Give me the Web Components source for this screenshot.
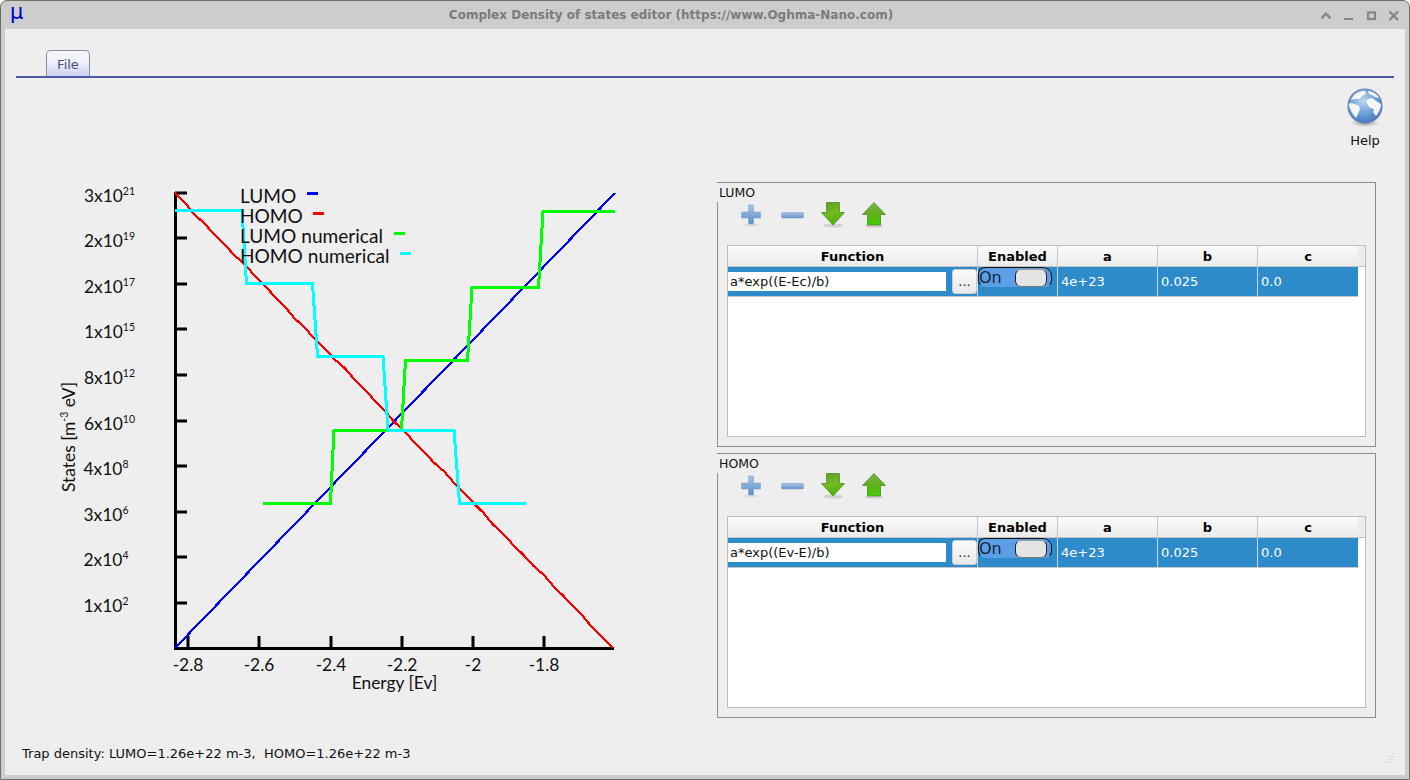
<!DOCTYPE html>
<html><head><meta charset="utf-8"><style>
html,body{margin:0;padding:0;width:1410px;height:780px;overflow:hidden;background:#fff}
body{font-family:"DejaVu Sans",sans-serif}
</style></head><body>
<app-window>
<title-bar slot="title" heading="Complex Density of states editor (https://www.Oghma-Nano.com)"></title-bar>
<ribbon-bar slot="ribbon"></ribbon-bar>
<dos-chart slot="chart"></dos-chart>
<dos-group slot="groups" label="LUMO" formula="a*exp((E-Ec)/b)"></dos-group>
<dos-group slot="groups" label="HOMO" formula="a*exp((Ev-E)/b)"></dos-group>
<status-line slot="status">Trap density: LUMO=1.26e+22 m-3,&nbsp; HOMO=1.26e+22 m-3</status-line>
</app-window>
<script>
const def=(n,html,init)=>customElements.define(n,class extends HTMLElement{
 connectedCallback(){if(this.shadowRoot)return;const s=this.attachShadow({mode:'open'});s.innerHTML=typeof html==='function'?html(this):html;if(init)init(s,this);}
});
def('app-window',`<style>
:host{display:block;width:1410px;height:780px;box-sizing:border-box;background:#cdcdcd;border:1px solid #6f6f6f;border-radius:7px 7px 0 0;overflow:hidden;position:relative}
.body{margin:0 4px 4px 4px;height:746px;background:#eeeeee;display:flex;flex-direction:column;box-sizing:border-box}
.main{display:flex;flex:none;height:536px}
.left{width:712px;flex:none}
.right{flex:none;width:659px;display:flex;flex-direction:column;gap:6px}
.status{margin-top:28px;padding-left:17px}
.grip{position:absolute;right:15px;bottom:16px;width:11px;height:11px;background-image:radial-gradient(circle,#c0c0c0 .8px,transparent 1px);background-size:3px 3px;clip-path:polygon(100% 0,100% 100%,0 100%)}
</style><slot name="title"></slot><div class="body"><slot name="ribbon"></slot>
<div class="main"><div class="left"><slot name="chart"></slot></div><div class="right"><slot name="groups"></slot></div></div>
<div class="status"><slot name="status"></slot></div></div><div class="grip"></div>`);

def('title-bar',h=>`<style>
:host{display:flex;align-items:center;height:28px;position:relative;color:#7b7b7b}
.mu{font:21px "DejaVu Sans",sans-serif;color:#0000c8;position:absolute;left:9px;top:-3px;line-height:28px}
.t{flex:1;text-align:center;font:bold 12px "DejaVu Sans",sans-serif;padding-right:68px;white-space:nowrap}
svg{position:absolute;left:1316px;top:0}
</style><span class="mu">μ</span><span class="t">${h.getAttribute('heading')}</span>
<svg width="90" height="27" fill="none" stroke="#858585" stroke-width="2.200"><path d="M4.500 17.500 9 12.500 13.500 17.500"/><path d="M27 18H36"/><rect x="51" y="11.500" width="7" height="6.500"/><path d="M72.500 10.500 81 19M81 10.500 72.500 19"/></svg>`);

def('ribbon-bar',`<style>
:host{display:block;height:153px;position:relative;flex:none}
.tabs{height:49px;margin:0 11px;border-bottom:2px solid #4b5aa6;box-sizing:border-box;display:flex;align-items:flex-end;padding-left:30px}
.tab{width:44px;height:26px;box-sizing:border-box;border:1px solid #8a8aa8;border-bottom:none;border-radius:5px 5px 0 0;background:linear-gradient(#f6f6fb,#eef0fa 45%,#ccd2f2);color:#4a4a86;font:13px "DejaVu Sans",sans-serif;text-align:center;line-height:28px}
.help{position:absolute;right:10px;top:58px;width:60px;display:flex;flex-direction:column;align-items:center;font:13px "DejaVu Sans",sans-serif;color:#111;gap:5px}
</style><div class="tabs"><div class="tab">File</div></div>
<div class="help"><svg width="40" height="41" viewBox="0 0 40 41">
<defs><radialGradient id="g" cx=".45" cy=".35" r=".75"><stop offset="0" stop-color="#bcd6f0"/><stop offset=".6" stop-color="#5f97d2"/><stop offset="1" stop-color="#3f6fb4"/></radialGradient>
<radialGradient id="s"><stop offset="0" stop-color="#666" stop-opacity=".65"/><stop offset="1" stop-color="#777" stop-opacity="0"/></radialGradient></defs>
<ellipse cx="20" cy="36" rx="15" ry="4" fill="url(#s)"/>
<circle cx="20" cy="19" r="17" fill="url(#g)" stroke="#6c7fb8" stroke-width="1.200"/>
<path d="M9 8C13 4.500 17 3.500 20 4L21 7 17 9 15 12 10 12 6 13ZM23 4C28 4.500 32 7 34.500 11L30 10 27 8 24 7ZM3.500 17C6 15 11 17 14 19 16 22 14 24 13 27L11 31C7 27 5 22 3.500 17ZM21 13 27 11 31 14 36 17C36 21 34 25 31 29L28 25 29 22 25 21 22 17Z" fill="#f5f6f8"/>
</svg><span>Help</span></div>`);

def('status-line',`<style>:host{display:block;font:13px "DejaVu Sans",sans-serif;color:#111;line-height:16px;white-space:nowrap}</style><slot></slot>`);

const plus=`<svg width="24" height="24" viewBox="0 0 24 24"><defs><linearGradient id="b" x1="0" y1="0" x2="0" y2="1"><stop offset="0" stop-color="#a9c4e6"/><stop offset="1" stop-color="#5f8dc6"/></linearGradient></defs><ellipse cx="12" cy="22" rx="8" ry="1.500" fill="#000" opacity=".07"/><path d="M9.500 2h5v7H21.500v6h-7v6h-5v-6H2.500V9h7Z" fill="url(#b)" stroke="#7ea0cf" stroke-width=".6"/></svg>`;
const minus=`<svg width="24" height="24" viewBox="0 0 24 24"><defs><linearGradient id="c" x1="0" y1="0" x2="0" y2="1"><stop offset="0" stop-color="#a9c4e6"/><stop offset="1" stop-color="#6592ca"/></linearGradient></defs><rect x="1.500" y="9.500" width="22" height="5.500" rx="1" fill="url(#c)" stroke="#7ea0cf" stroke-width=".6"/></svg>`;
const down=`<svg width="26" height="26" viewBox="0 0 26 26"><defs><linearGradient id="d" x1="0" y1="0" x2=".3" y2="1"><stop offset="0" stop-color="#5f9a30"/><stop offset=".55" stop-color="#70bd1c"/><stop offset="1" stop-color="#55b00e"/></linearGradient></defs><ellipse cx="13" cy="23.500" rx="10" ry="2" fill="#000" opacity=".12"/><path d="M6.500 .500H19.500V10.500H24.500L13 23 1.500 10.500H6.500Z" fill="url(#d)" stroke="#4f8a24" stroke-width=".8"/></svg>`;
const up=`<svg width="26" height="26" viewBox="0 0 26 26"><defs><linearGradient id="u" x1="0" y1="0" x2="0" y2="1"><stop offset="0" stop-color="#7fb24a"/><stop offset=".5" stop-color="#5fb01e"/><stop offset="1" stop-color="#3fd100"/></linearGradient></defs><ellipse cx="13" cy="24" rx="9" ry="1.800" fill="#000" opacity=".12"/><path d="M13 .500 24.500 12.500H19.500V23H6.500V12.500H1.500Z" fill="url(#u)" stroke="#4f8a24" stroke-width=".8"/></svg>`;

def('on-switch',`<style>
:host{display:block;width:74px;height:20px;position:relative;font:16px "DejaVu Sans",sans-serif;color:#14233a}
.bg{position:absolute;inset:0;background:#5d9fe6;border-radius:7px 9px 7px 7px;border:1px solid #111;border-bottom-color:#5d9fe6;box-sizing:border-box}
.on{position:absolute;left:1px;top:1px;line-height:20px}
.k{position:absolute;left:37px;top:2px;width:32px;height:18px;box-sizing:border-box;background:#e4e4e4;border-radius:6px;border:1px solid #222;border-top-color:#999;border-bottom-color:#777}
</style><div class="bg"></div><span class="on">On</span><div class="k"></div>`);

def('dos-table',h=>`<style>
:host{display:block;width:639px;height:192px;box-sizing:border-box;border:1px solid #bdbdbd;background:#fff;font:13px "DejaVu Sans",sans-serif}
.g{display:grid;grid-template-columns:250px 80px 100px 100px 100px}
.hdr{height:20px;background:#ededed;border-bottom:1px solid #c4c4c4;color:#000;width:637px;position:relative}
.hdr .g{height:20px;width:630px;background:linear-gradient(#fbfbfb,#ebebeb)}
.hdr span{font-weight:bold;text-align:center;line-height:21px;border-right:1px solid #c8c8c8;box-sizing:border-box}
.hdr span:last-child{border-right:none}
.row{height:29px;background:#2e8bc9;color:#fff;width:630px;border-bottom:1px solid #c6c6c6}
.row>div{box-sizing:border-box;border-right:1px solid #c3d6e6;height:29px;line-height:30px;padding-left:3px;position:relative}
.row>div:last-child{border-right:none}
.f{padding:0!important;display:flex;align-items:flex-start}
.fi{display:block;margin-top:5px;width:218px;height:19px;background:#fff;color:#111;padding-left:2px;box-sizing:border-box;line-height:20px}
.b{margin:2px 0 0 6px;width:25px;height:25px;box-sizing:border-box;background:linear-gradient(#fafafa,#e8e8e8);border:1px solid #cfcfcf;border-radius:3px;color:#222;text-align:center;line-height:23px}
.s{padding:0!important}
</style><div class="hdr"><div class="g"><span>Function</span><span>Enabled</span><span>a</span><span>b</span><span>c</span></div></div>
<div class="row g"><div class="f"><div class="fi">${h.getAttribute('formula')}</div><div class="b">...</div></div><div class="s"><on-switch></on-switch></div><div>4e+23</div><div>0.025</div><div>0.0</div></div>`);

def('dos-group',h=>`<style>
:host{display:block;width:659px;height:265px;box-sizing:border-box;position:relative;padding:0;font:12.500px "DejaVu Sans",sans-serif}
.top{height:1px;background:#8e8e8e}
.frame{box-sizing:border-box;height:264px;border-right:1px solid #8e8e8e;border-bottom:1px solid #8e8e8e;display:flex;flex-direction:column;position:relative}
.lab{height:19px;line-height:19px;padding-left:2px;color:#111;flex:none}
.inner{flex:1;border-left:1px solid #8e8e8e;padding-left:9px;display:flex;flex-direction:column}
.tb{height:43px;display:flex;align-items:flex-start;flex:none;padding-left:3px}
.tb span{width:41px;display:flex;justify-content:center}
.tb span:nth-child(1),.tb span:nth-child(2){padding-top:1px;height:24px}
</style><div class="top"></div><div class="frame"><div class="lab">${h.getAttribute('label')}</div>
<div class="inner"><div class="tb"><span>${plus}</span><span>${minus}</span><span>${down}</span><span>${up}</span></div><dos-table formula="${h.getAttribute('formula').replace(/"/g,'&quot;')}"></dos-table></div></div>`);

const yt=[['3','21',193],['2','19',238],['2','17',284],['1','15',329],['8','12',375],['6','10',421],['4','8',466],['3','6',512],['2','4',557],['1','2',603]];
const xt=[[188,'-2.8'],[259,'-2.6'],[331,'-2.4'],[402,'-2.2'],[473,'-2'],[544,'-1.8']];
function wig(x0,y0,x1,y1){let p=[];const n=44;for(let i=0;i<=n;i++){const t=i/n;const e=(i===0||i===n)?0:1;const w=e*(i%2?1:-1)*((i%5)%3)*.3;p.push((x0+(x1-x0)*t+w).toFixed(1)+','+(y0+(y1-y0)*t-w).toFixed(1));}return p.join(' ');}
def('dos-chart',()=>`<style>:host{display:block;width:712px;height:536px}svg{display:block}
 text{font-family:Lato,"Liberation Sans",sans-serif;fill:#111}
 .c{fill:none;stroke-linejoin:miter}
 </style><svg width="712" height="536" viewBox="5 182 712 536">
 <g stroke="#000" stroke-width="3" fill="none"><path d="M175.500 192V650M174 648.500H614"/>
 ${yt.map(t=>`<path d="M175 ${t[2]}H187"/>`).join('')}${xt.map(t=>`<path d="M${t[0]} 636V648"/>`).join('')}</g>
 <g text-anchor="end">${yt.map(t=>`<text x="${t[1].length>1?135:128.500}" y="${t[2]+9}" font-size="17.400">${t[0]}x10<tspan font-size="10.500" dy="-7">${t[1]}</tspan></text>`).join('')}</g>
 ${xt.map(t=>`<text x="${t[0]}" y="671" font-size="17.400" text-anchor="middle">${t[1]}</text>`).join('')}
 <text x="394.500" y="689" font-size="17.400" text-anchor="middle">Energy [Ev]</text>
 <text transform="translate(75,437) rotate(-90)" font-size="17.400" text-anchor="middle">States [m<tspan font-size="10.500" dy="-7">-3</tspan><tspan dy="7"> eV]</tspan></text>
 <polyline class="c" shape-rendering="crispEdges" stroke="#0000ff" style="stroke-width:2.200" points="${wig(175,648,615,193)}"/>
 <polyline class="c" shape-rendering="crispEdges" stroke="#ff0000" style="stroke-width:2.200" points="${wig(175,193,613,648)}"/>
 <polyline class="c" stroke="#00ff00" shape-rendering="crispEdges" style="stroke-width:3" points="263,503 330.500,503 334,430 401.500,430 405.500,360.500 467.500,360.500 472,287.500 538.500,287.500 543,211.500 615,211.500"/>
 <polyline class="c" stroke="#00ffff" shape-rendering="crispEdges" style="stroke-width:3" points="175,210.500 242,210.500 246.500,283.500 312.500,283.500 317.500,356 383,356 388,430 454,430 459.500,503.500 525.500,503.500"/>
 <g font-size="19.100"><text x="240" y="203">LUMO</text><text x="240" y="223">HOMO</text><text x="240" y="243">LUMO numerical</text><text x="240" y="263">HOMO numerical</text></g>
 <g stroke-width="3"><path d="M307 193.500H318" stroke="#0000ff"/><path d="M313 213.500H324" stroke="#ff0000"/><path d="M394 233.500H405" stroke="#00ff00"/><path d="M400 253.500H411" stroke="#00ffff"/></g>
 </svg>`);
</script></body></html>
